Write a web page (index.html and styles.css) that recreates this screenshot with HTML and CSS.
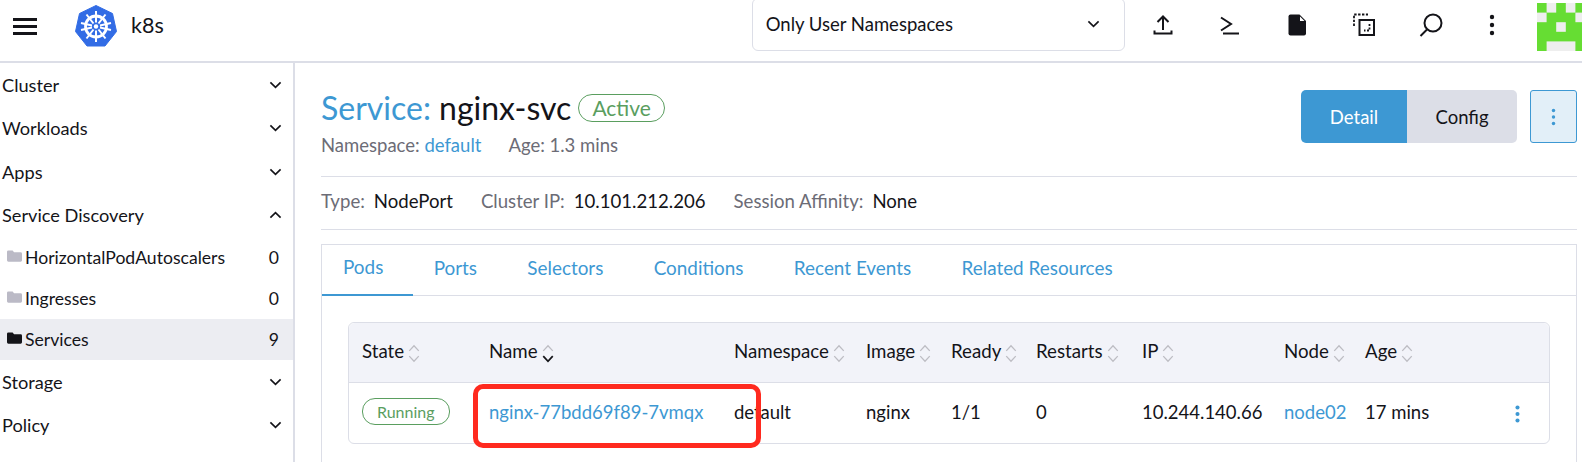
FILE: index.html
```html
<!DOCTYPE html>
<html lang="en">
<head>
    <meta charset="UTF-8">
    <meta name="viewport" content="width=device-width, initial-scale=1.0">
    <title>k8s - Service nginx-svc</title>
    <link rel="stylesheet" href="styles.css">
</head>
<body>
    <header class="topbar">
        <div class="burger"><span></span><span></span><span></span></div>
        <svg class="logo" viewBox="0 0 42 42">
            <path d="M21 0.5 L37.5 8.5 L41.5 26.5 L30 41 L12 41 L0.5 26.5 L4.5 8.5 Z" fill="#326ce5" stroke="#326ce5" stroke-linejoin="round"/>
            <g fill="none" stroke="#fff">
                <circle cx="21" cy="21.5" r="10.5" stroke-width="2.8"/>
                <path stroke-width="2" d="M21 6V17.5M21 25.5V37M6 18L17 20.5M25 22.5L36 25M36 18L25 20.5M17 22.5L6 25M11.5 9.5L18.5 18.5M23.5 24.5L30.5 33.5M30.5 9.5L23.5 18.5M18.5 24.5L11.5 33.5"/>
            </g>
            <circle cx="21" cy="21.5" r="2.2" fill="#fff"/>
        </svg>
        <span class="cluster-name">k8s</span>
        <div class="ns-select">
            <span>Only User Namespaces</span>
            <svg class="chev" viewBox="0 0 14 8"><path d="M1.5 1.2L7 6.5L12.5 1.2"/></svg>
        </div>
        <div class="top-icons">
            <svg class="ti" viewBox="0 0 24 24"><path class="ln" d="M12 17V4M6.5 9L12 3.5L17.5 9M3.5 17.5V20.5H20.5V17.5"/></svg>
            <svg class="ti" viewBox="0 0 24 24"><path class="ln" d="M3 4.5L13 11L3 17.5M5 20.5H21"/></svg>
            <svg class="ti" viewBox="0 0 24 24"><path fill="#141419" d="M3.5 3.5Q3.5 1.5 5.5 1.5H14.5L21 8V20.5Q21 22.5 19 22.5H5.5Q3.5 22.5 3.5 20.5Z"/><path fill="#fff" d="M15 3.5L19.5 8H15Z"/></svg>
            <svg class="ti" viewBox="0 0 24 24"><path class="ln thin" stroke-dasharray="2.4 1.5" d="M2 13V1.5H16"/><path class="ln" d="M7.5 7H22V22H7.5Z"/><path class="ln thin" stroke-dasharray="2 1.5" d="M17.5 11V17.5H12"/></svg>
            <svg class="ti" viewBox="0 0 24 24"><circle class="ln" cx="14" cy="10" r="8.5"/><path class="ln" d="M8 16.5L1.5 23"/></svg>
            <svg class="ti dots" viewBox="0 0 24 24"><circle cx="12" cy="4" r="2.2"/><circle cx="12" cy="12" r="2.2"/><circle cx="12" cy="20" r="2.2"/></svg>
        </div>
        <svg class="avatar" viewBox="0 0 45 48">
            <rect width="45" height="48" fill="#66dd33"/>
            <g fill="#eeeeee">
                <rect x="9.6" y="0" width="9.6" height="9.6"/>
                <rect x="28.8" y="0" width="9.6" height="9.6"/>
                <rect x="0" y="9.6" width="9.6" height="9.6"/>
                <rect x="38.4" y="9.6" width="9.6" height="9.6"/>
                <rect x="19.2" y="19.2" width="9.6" height="9.6"/>
                <rect x="9.6" y="38.4" width="28.8" height="9.6"/>
            </g>
        </svg>
    </header>

    <div class="layout">
        <nav class="sidebar">
            <div class="group">Cluster<svg class="chev" viewBox="0 0 14 8"><path d="M1.5 1.2L7 6.5L12.5 1.2"/></svg></div>
            <div class="group">Workloads<svg class="chev" viewBox="0 0 14 8"><path d="M1.5 1.2L7 6.5L12.5 1.2"/></svg></div>
            <div class="group">Apps<svg class="chev" viewBox="0 0 14 8"><path d="M1.5 1.2L7 6.5L12.5 1.2"/></svg></div>
            <div class="group">Service Discovery<svg class="chev" viewBox="0 0 14 8"><path d="M1.5 6.8L7 1.5L12.5 6.8"/></svg></div>
            <div class="child">
                <svg class="folder" viewBox="0 0 16 12"><path d="M0 1.5Q0 0 1.5 0H6L7.5 2H14.5Q16 2 16 3.5V10.5Q16 12 14.5 12H1.5Q0 12 0 10.5Z"/></svg>
                <span class="child-name">HorizontalPodAutoscalers</span><span class="count">0</span>
            </div>
            <div class="child">
                <svg class="folder" viewBox="0 0 16 12"><path d="M0 1.5Q0 0 1.5 0H6L7.5 2H14.5Q16 2 16 3.5V10.5Q16 12 14.5 12H1.5Q0 12 0 10.5Z"/></svg>
                <span class="child-name">Ingresses</span><span class="count">0</span>
            </div>
            <div class="child active">
                <svg class="folder" viewBox="0 0 16 12"><path d="M0 1.5Q0 0 1.5 0H6L7.5 2H14.5Q16 2 16 3.5V10.5Q16 12 14.5 12H1.5Q0 12 0 10.5Z"/></svg>
                <span class="child-name">Services</span><span class="count">9</span>
            </div>
            <div class="group">Storage<svg class="chev" viewBox="0 0 14 8"><path d="M1.5 1.2L7 6.5L12.5 1.2"/></svg></div>
            <div class="group">Policy<svg class="chev" viewBox="0 0 14 8"><path d="M1.5 1.2L7 6.5L12.5 1.2"/></svg></div>
        </nav>

        <main class="content">
            <div class="title-row">
                <div>
                    <h1 class="title"><span><a>Service:</a> nginx-svc</span> <span class="badge-active">Active</span></h1>
                    <div class="meta"><span>Namespace: <a>default</a></span><span>Age: 1.3 mins</span></div>
                </div>
                <div class="actions">
                    <div class="btn-group">
                        <button class="btn on">Detail</button>
                        <button class="btn off">Config</button>
                    </div>
                    <button class="btn-more">
                        <svg viewBox="0 0 6 22"><circle cx="3" cy="3" r="2.1"/><circle cx="3" cy="11" r="2.1"/><circle cx="3" cy="19" r="2.1"/></svg>
                    </button>
                </div>
            </div>
            <div class="info-row">
                <span><em>Type:</em>NodePort</span>
                <span><em>Cluster IP:</em>10.101.212.206</span>
                <span><em>Session Affinity:</em>None</span>
            </div>
            <section class="tabs-box">
                <ul class="tabs">
                    <li class="selected">Pods</li>
                    <li>Ports</li>
                    <li>Selectors</li>
                    <li>Conditions</li>
                    <li>Recent Events</li>
                    <li>Related Resources</li>
                </ul>
                <div class="tab-body">
                    <div class="table-wrap">
                        <table class="pods">
                            <colgroup>
                                <col class="c-state"><col class="c-name"><col class="c-ns"><col class="c-image"><col class="c-ready"><col class="c-restarts"><col class="c-ip"><col class="c-node"><col class="c-age"><col>
                            </colgroup>
                            <thead>
                                <tr>
                                    <th>State<svg class="sort" viewBox="0 0 14 22"><path d="M1.5 8L7 2L12.5 8M1.5 14L7 20L12.5 14"/></svg></th>
                                    <th>Name<svg class="sort" viewBox="0 0 14 22"><path d="M1.5 8L7 2L12.5 8"/><path class="cur" d="M1.5 14L7 20L12.5 14"/></svg></th>
                                    <th>Namespace<svg class="sort" viewBox="0 0 14 22"><path d="M1.5 8L7 2L12.5 8M1.5 14L7 20L12.5 14"/></svg></th>
                                    <th>Image<svg class="sort" viewBox="0 0 14 22"><path d="M1.5 8L7 2L12.5 8M1.5 14L7 20L12.5 14"/></svg></th>
                                    <th>Ready<svg class="sort" viewBox="0 0 14 22"><path d="M1.5 8L7 2L12.5 8M1.5 14L7 20L12.5 14"/></svg></th>
                                    <th>Restarts<svg class="sort" viewBox="0 0 14 22"><path d="M1.5 8L7 2L12.5 8M1.5 14L7 20L12.5 14"/></svg></th>
                                    <th>IP<svg class="sort" viewBox="0 0 14 22"><path d="M1.5 8L7 2L12.5 8M1.5 14L7 20L12.5 14"/></svg></th>
                                    <th>Node<svg class="sort" viewBox="0 0 14 22"><path d="M1.5 8L7 2L12.5 8M1.5 14L7 20L12.5 14"/></svg></th>
                                    <th>Age<svg class="sort" viewBox="0 0 14 22"><path d="M1.5 8L7 2L12.5 8M1.5 14L7 20L12.5 14"/></svg></th>
                                    <th></th>
                                </tr>
                            </thead>
                            <tbody>
                                <tr>
                                    <td><span class="badge-running">Running</span></td>
                                    <td><a>nginx-77bdd69f89-7vmqx</a></td>
                                    <td>default</td>
                                    <td>nginx</td>
                                    <td>1/1</td>
                                    <td>0</td>
                                    <td>10.244.140.66</td>
                                    <td><a>node02</a></td>
                                    <td>17 mins</td>
                                    <td class="row-menu"><svg viewBox="0 0 6 22"><circle cx="3" cy="3" r="2.5"/><circle cx="3" cy="11" r="2.5"/><circle cx="3" cy="19" r="2.5"/></svg></td>
                                </tr>
                            </tbody>
                        </table>
                        <div class="highlight"></div>
                    </div>
                </div>
            </section>
        </main>
    </div>
</body>
</html>
```
FILE: styles.css
```css
* {
    box-sizing: border-box;
}
html, body {
    height: 100%;
}
body {
    margin: 0;
    font-family: Lato, "Open Sans", sans-serif;
    font-size: 18.5px;
    color: #141419;
    background-color: white;
    overflow: hidden;
}
a {
    color: #3d98d3;
}
.topbar {
    height: 63px;
    display: flex;
    align-items: flex-start;
    border-bottom: 2px solid #dcdee7;
}
.burger {
    width: 24px;
    margin: 18px 38px 0 13px;
    display: flex;
    flex-direction: column;
    gap: 4px;
}
.burger span {
    height: 3px;
    background-color: #141419;
}
.logo {
    width: 42px;
    height: 42px;
    margin-top: 5px;
    flex-shrink: 0;
}
.cluster-name {
    font-size: 21.5px;
    margin: 12px 0 0 14px;
}
.ns-select {
    margin: -2px 0 0 588px;
    width: 373px;
    height: 53px;
    border: 1px solid #dcdee7;
    border-radius: 6px;
    padding: 0 24px 1px 13px;
    display: flex;
    align-items: center;
    justify-content: space-between;
}
.chev {
    width: 13px;
    height: 8px;
    fill: none;
    stroke: #141419;
    stroke-width: 1.8;
}
.top-icons {
    display: flex;
    align-items: center;
    height: 50px;
    margin-left: 26px;
    gap: 43px;
}
.ti {
    width: 24px;
    height: 24px;
}
.ln {
    fill: none;
    stroke: #141419;
    stroke-width: 2;
}
.ln.thin {
    stroke-width: 1.8;
}
.dots {
    margin-left: -6px;
    fill: #141419;
}
.avatar {
    width: 45px;
    height: 48px;
    margin: 3px 0 0 auto;
    flex-shrink: 0;
}
.layout {
    display: flex;
    height: calc(100% - 63px);
}
.sidebar {
    width: 295px;
    flex-shrink: 0;
    padding-top: 0.4px;
    border-right: 2px solid #dcdee7;
}
.group {
    height: 43.3px;
    padding: 0 11px 0 2px;
    display: flex;
    align-items: center;
    justify-content: space-between;
    font-size: 18.2px;
}
.group + .child {
    margin-top: 0.6px;
}
.child {
    height: 41px;
    display: flex;
    align-items: center;
    padding: 0 14px 0 7px;
    font-size: 17.6px;
}
.child-name {
    flex: 1;
    margin-left: 3px;
}
.folder {
    width: 15px;
    height: 12px;
    margin-bottom: 3px;
    fill: #bbbac6;
}
.child.active {
    background-color: #ecedf2;
}
.child.active .folder {
    fill: #141419;
}
.content {
    flex: 1;
    padding: 27px 5px 0 26px;
    min-width: 0;
}
.title-row {
    display: flex;
    justify-content: space-between;
    align-items: flex-start;
    border-bottom: 1px solid #dcdee7;
    height: 87px;
}
.title {
    margin: 0;
    font-size: 32px;
    line-height: 36px;
    font-weight: 400;
    display: flex;
    align-items: center;
    gap: 7px;
}
.badge-active {
    font-size: 21px;
    line-height: 26px;
    color: #5a9e5f;
    border: 1px solid #5a9e5f;
    border-radius: 14px;
    padding: 0 13px;
}
.meta {
    display: flex;
    gap: 27px;
    color: #6c6c76;
    margin-top: 8px;
}
.actions {
    display: flex;
    gap: 13px;
}
.btn-group {
    display: flex;
}
.btn {
    height: 53px;
    border: none;
    font-family: inherit;
    font-size: 18.5px;
}
.btn.on {
    width: 106px;
    background-color: #3d98d3;
    color: white;
    border-radius: 5px 0 0 5px;
}
.btn.off {
    width: 110px;
    background-color: #dcdee7;
    color: #141419;
    border-radius: 0 5px 5px 0;
}
.btn-more {
    width: 47px;
    height: 53px;
    padding: 0;
    background-color: #e2eff8;
    border: 1px solid #3d98d3;
    border-radius: 3px;
    display: flex;
    align-items: center;
    justify-content: center;
}
.btn-more svg {
    width: 5px;
    height: 18px;
    fill: #3d98d3;
}
.info-row {
    height: 53px;
    margin-bottom: 14px;
    display: flex;
    align-items: flex-start;
    font-size: 18.6px;
    line-height: 49px;
    gap: 28px;
    border-bottom: 1px solid #dcdee7;
}
.info-row em {
    font-style: normal;
    color: #6c6c76;
    margin-right: 9px;
}
.tabs-box {
    border: 1px solid #dcdee7;
    padding-bottom: 30px;
}
.tabs {
    list-style: none;
    margin: 0;
    padding: 0;
    height: 51px;
    display: flex;
    border-bottom: 1px solid #dcdee7;
    color: #3d98d3;
    font-size: 18.9px;
}
.tabs li {
    padding: 0 29.3px 7px 21px;
    height: 51px;
    display: flex;
    align-items: center;
}
.tabs li.selected {
    border-bottom: 2px solid #3d98d3;
}
.tab-body {
    padding: 26px 26px 0 26px;
}
.table-wrap {
    position: relative;
    border: 1px solid #dcdee7;
    border-radius: 6px;
}
.pods {
    width: 100%;
    border-collapse: collapse;
    table-layout: fixed;
}
.c-state { width: 127px; }
.c-name { width: 245px; }
.c-ns { width: 132px; }
.c-image { width: 85px; }
.c-ready { width: 85px; }
.c-restarts { width: 106px; }
.c-ip { width: 142px; }
.c-node { width: 81px; }
.c-age { width: 150px; }
.pods th {
    height: 59px;
    padding: 0 0 2px 13px;
    background-color: #f2f3f9;
    border-bottom: 1px solid #dcdee7;
    font-size: 18.7px;
    font-weight: 400;
    text-align: left;
    white-space: nowrap;
}
.pods th:first-child {
    border-top-left-radius: 6px;
}
.pods th:last-child {
    border-top-right-radius: 6px;
}
.pods td {
    height: 61px;
    padding: 0 0 2px 13px;
    white-space: nowrap;
}
.sort {
    width: 14px;
    height: 19px;
    margin-left: 3px;
    vertical-align: middle;
    fill: none;
    stroke: #bdbdc3;
    stroke-width: 1.5;
}
.sort .cur {
    stroke: #141419;
    stroke-width: 2;
}
.badge-running {
    display: inline-block;
    font-size: 16px;
    line-height: 25px;
    color: #5a9e5f;
    border: 1px solid #5a9e5f;
    border-radius: 13px;
    padding: 0 14px;
}
.row-menu svg {
    width: 5px;
    height: 18px;
    fill: #3d98d3;
    vertical-align: middle;
}
.highlight {
    position: absolute;
    left: 124px;
    top: 61px;
    width: 288px;
    height: 64px;
    border: 5px solid #ff2a1f;
    border-radius: 10px;
}
```
